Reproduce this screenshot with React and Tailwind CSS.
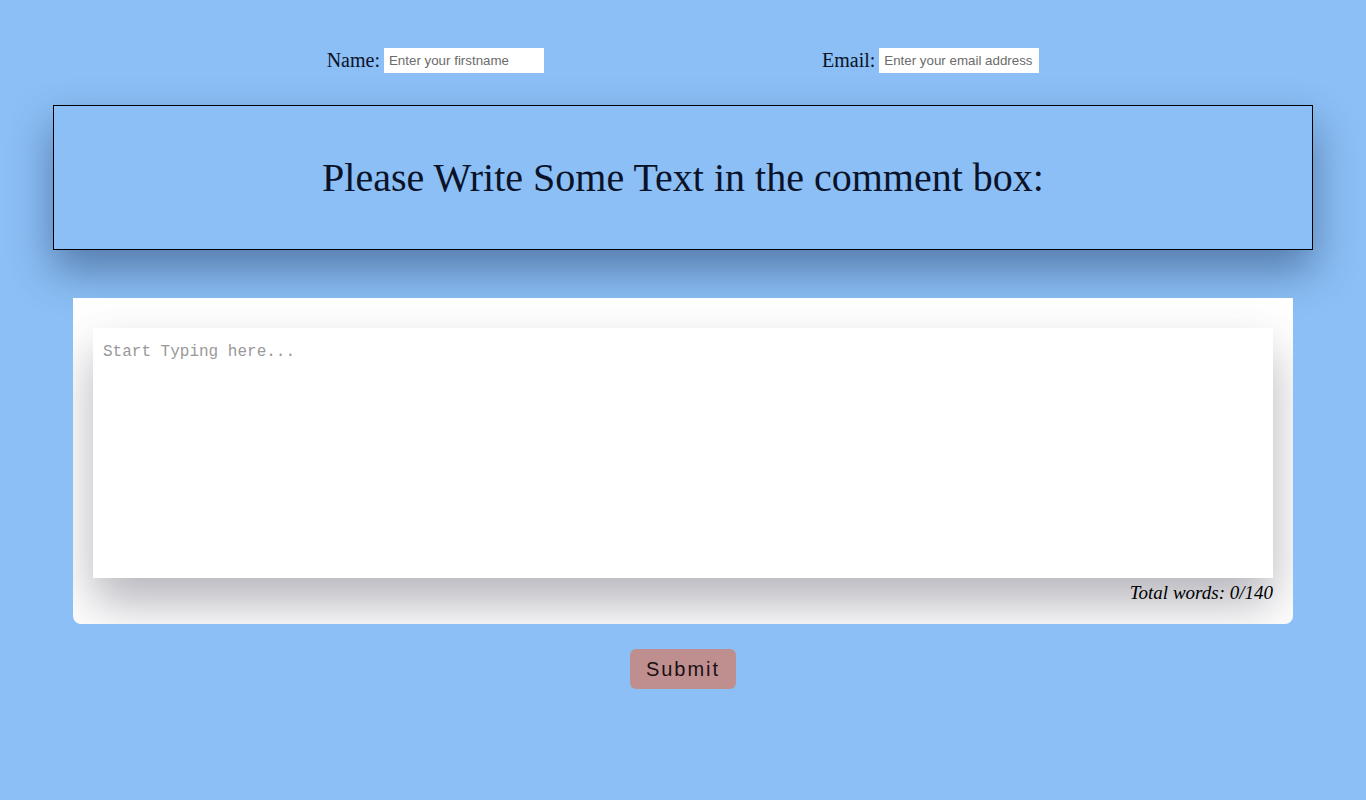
import { useState } from "react";

const App = () => {
  const [name, setName] = useState("");
  const [email, setEmail] = useState("");
  const [text, setText] = useState("");

  const words = text.trim() ? text.trim().split(/\s+/).length : 0;

  return (
    <div className="min-h-screen bg-[#8bbff5] pt-[45px] font-['Liberation_Serif',serif] text-[#0a1228]">
      {/* TOP FIELDS */}
      <div className="flex justify-center gap-[278px]">
        <label className="flex items-center gap-1 text-[20px]">
          Name:
          <input
            type="text"
            value={name}
            onChange={(e) => setName(e.target.value)}
            placeholder="Enter your firstname"
            className="w-[160px] h-[25px] bg-white px-[5px] text-[13.33px] font-['Liberation_Sans',sans-serif] text-black placeholder:text-[#6b6b6b] outline-none"
          />
        </label>
        <label className="flex items-center gap-1 text-[20px]">
          Email:
          <input
            type="email"
            value={email}
            onChange={(e) => setEmail(e.target.value)}
            placeholder="Enter your email address"
            className="w-[160px] h-[25px] bg-white px-[5px] text-[13.33px] font-['Liberation_Sans',sans-serif] text-black placeholder:text-[#6b6b6b] outline-none"
          />
        </label>
      </div>

      {/* HEADING BOX */}
      <div className="mx-[53px] mt-[30px] h-[145px] border border-black flex items-center justify-center shadow-[0_20px_40px_rgba(20,40,80,0.45)]">
        <h1 className="text-[40px] leading-none">
          Please Write Some Text in the comment box:
        </h1>
      </div>

      {/* COMMENT CARD */}
      <div className="mx-[73px] mt-12 bg-white rounded-b-lg px-5 pt-[30px] pb-[19px] overflow-hidden">
        <textarea
          value={text}
          onChange={(e) => setText(e.target.value)}
          placeholder="Start Typing here..."
          className="block w-full h-[250px] resize-none bg-white px-[10px] pt-[12px] pb-[10px] font-['Liberation_Mono',monospace] text-[16px] text-black placeholder:text-[#999] outline-none shadow-[0_25px_45px_rgba(60,60,80,0.38)]"
        />
        <p className="mt-[3px] text-right italic text-[19px] text-black leading-[24px]">
          Total words: {words}/140
        </p>
      </div>

      {/* SUBMIT */}
      <div className="flex justify-center mt-[25px]">
        <button className="w-[106px] h-[40px] rounded-md bg-[#bf8f8f] text-[20px] tracking-[2px] font-['Liberation_Sans',sans-serif] text-[#1a0f12]">
          Submit
        </button>
      </div>
    </div>
  );
};

export default App;
